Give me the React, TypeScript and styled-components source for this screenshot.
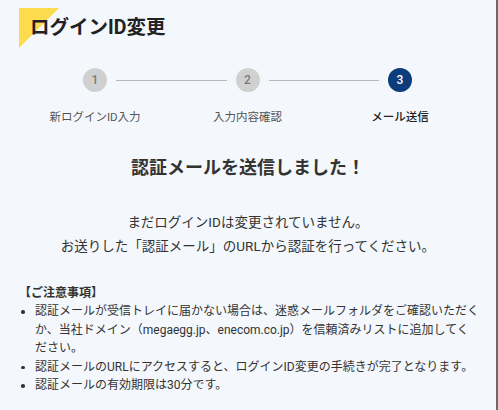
import React from 'react';
import styled, { createGlobalStyle } from 'styled-components';

const GlobalStyle = createGlobalStyle`
  html, body {
    margin: 0;
    padding: 0;
    background: #f4f8fc;
  }
  body {
    font-family: Roboto, "Noto Sans CJK JP", sans-serif;
    color: #333;
  }
`;

const Page = styled.div`
  box-sizing: border-box;
  width: 498px;
  height: 410px;
  padding: 8px 8px 0 19px;
  border-right: 2px solid #6b6b6b;
  background: #f4f8fc;
  overflow: hidden;
`;

const Header = styled.div`
  position: relative;
  height: 40px;

  &::before {
    content: '';
    position: absolute;
    left: 0;
    top: 0;
    width: 40px;
    height: 40px;
    background: #fddb4f;
    clip-path: polygon(0 0, 100% 0, 0 100%);
  }
`;

const Title = styled.h1`
  position: relative;
  margin: 0;
  padding-left: 11px;
  font-size: 19.5px;
  line-height: 40px;
  font-weight: 700;
  color: #222;
`;

const Stepper = styled.div`
  display: flex;
  align-items: flex-start;
  margin: 20px 0 0 64px;
  width: 329px;
`;

const Step = styled.div`
  display: flex;
  flex-direction: column;
  align-items: center;
  width: 24px;
`;

const Circle = styled.div<{ $active?: boolean }>`
  width: 24px;
  height: 24px;
  border-radius: 50%;
  display: flex;
  align-items: center;
  justify-content: center;
  font-size: 12px;
  font-weight: 500;
  background: ${(p) => (p.$active ? '#0d3c7d' : '#d0d0d0')};
  color: ${(p) => (p.$active ? '#fff' : '#7a7a7a')};
`;

const Connector = styled.div`
  flex: 1;
  height: 1px;
  margin: 12px 9px 0;
  background: #b8b8b8;
`;

const StepLabel = styled.div<{ $active?: boolean }>`
  display: flex;
  justify-content: center;
  width: 24px;
  margin-top: 17px;
  white-space: nowrap;
  font-size: 11.5px;
  line-height: 16px;
  font-weight: ${(p) => (p.$active ? 500 : 400)};
  color: ${(p) => (p.$active ? '#222' : '#555')};
`;

const Heading = styled.h2`
  margin: 30px 11px 0 0;
  text-align: center;
  font-size: 18px;
  line-height: 26px;
  font-weight: 700;
  color: #333;
`;

const Message = styled.p`
  margin: 29px 11px 0 0;
  text-align: center;
  font-size: 13.5px;
  line-height: 24px;
  color: #333;
`;

const Notes = styled.div`
  margin: 26px 8px 0 0;
  font-size: 12px;
  line-height: 18.5px;
  color: #333;
`;

const NotesTitle = styled.div`
  font-weight: 700;
  line-height: 18px;
`;

const NoteList = styled.ul`
  list-style: none;
  margin: 0;
  padding: 0;
`;

const NoteItem = styled.li`
  position: relative;
  padding-left: 16px;

  &::before {
    content: '';
    position: absolute;
    left: 2px;
    top: 8px;
    width: 3.5px;
    height: 3.5px;
    border-radius: 50%;
    background: #333;
  }
`;

const steps = ['新ログインID入力', '入力内容確認', 'メール送信'];
const current = 2;

export default function App() {
  return (
    <Page>
      <GlobalStyle />
      <Header>
        <Title>ログインID変更</Title>
      </Header>

      <Stepper>
        {steps.map((label, i) => (
          <React.Fragment key={label}>
            {i > 0 && <Connector />}
            <Step>
              <Circle $active={i === current}>{i + 1}</Circle>
              <StepLabel $active={i === current}>{label}</StepLabel>
            </Step>
          </React.Fragment>
        ))}
      </Stepper>

      <Heading>認証メールを送信しました！</Heading>

      <Message>
        まだログインIDは変更されていません。
        <br />
        お送りした「認証メール」のURLから認証を行ってください。
      </Message>

      <Notes>
        <NotesTitle>【ご注意事項】</NotesTitle>
        <NoteList>
          <NoteItem>
            認証メールが受信トレイに届かない場合は、迷惑メールフォルダをご確認いただくか、当社ドメイン（megaegg.jp、enecom.co.jp）を信頼済みリストに追加してください。
          </NoteItem>
          <NoteItem>認証メールのURLにアクセスすると、ログインID変更の手続きが完了となります。</NoteItem>
          <NoteItem>認証メールの有効期限は30分です。</NoteItem>
        </NoteList>
      </Notes>
    </Page>
  );
}
